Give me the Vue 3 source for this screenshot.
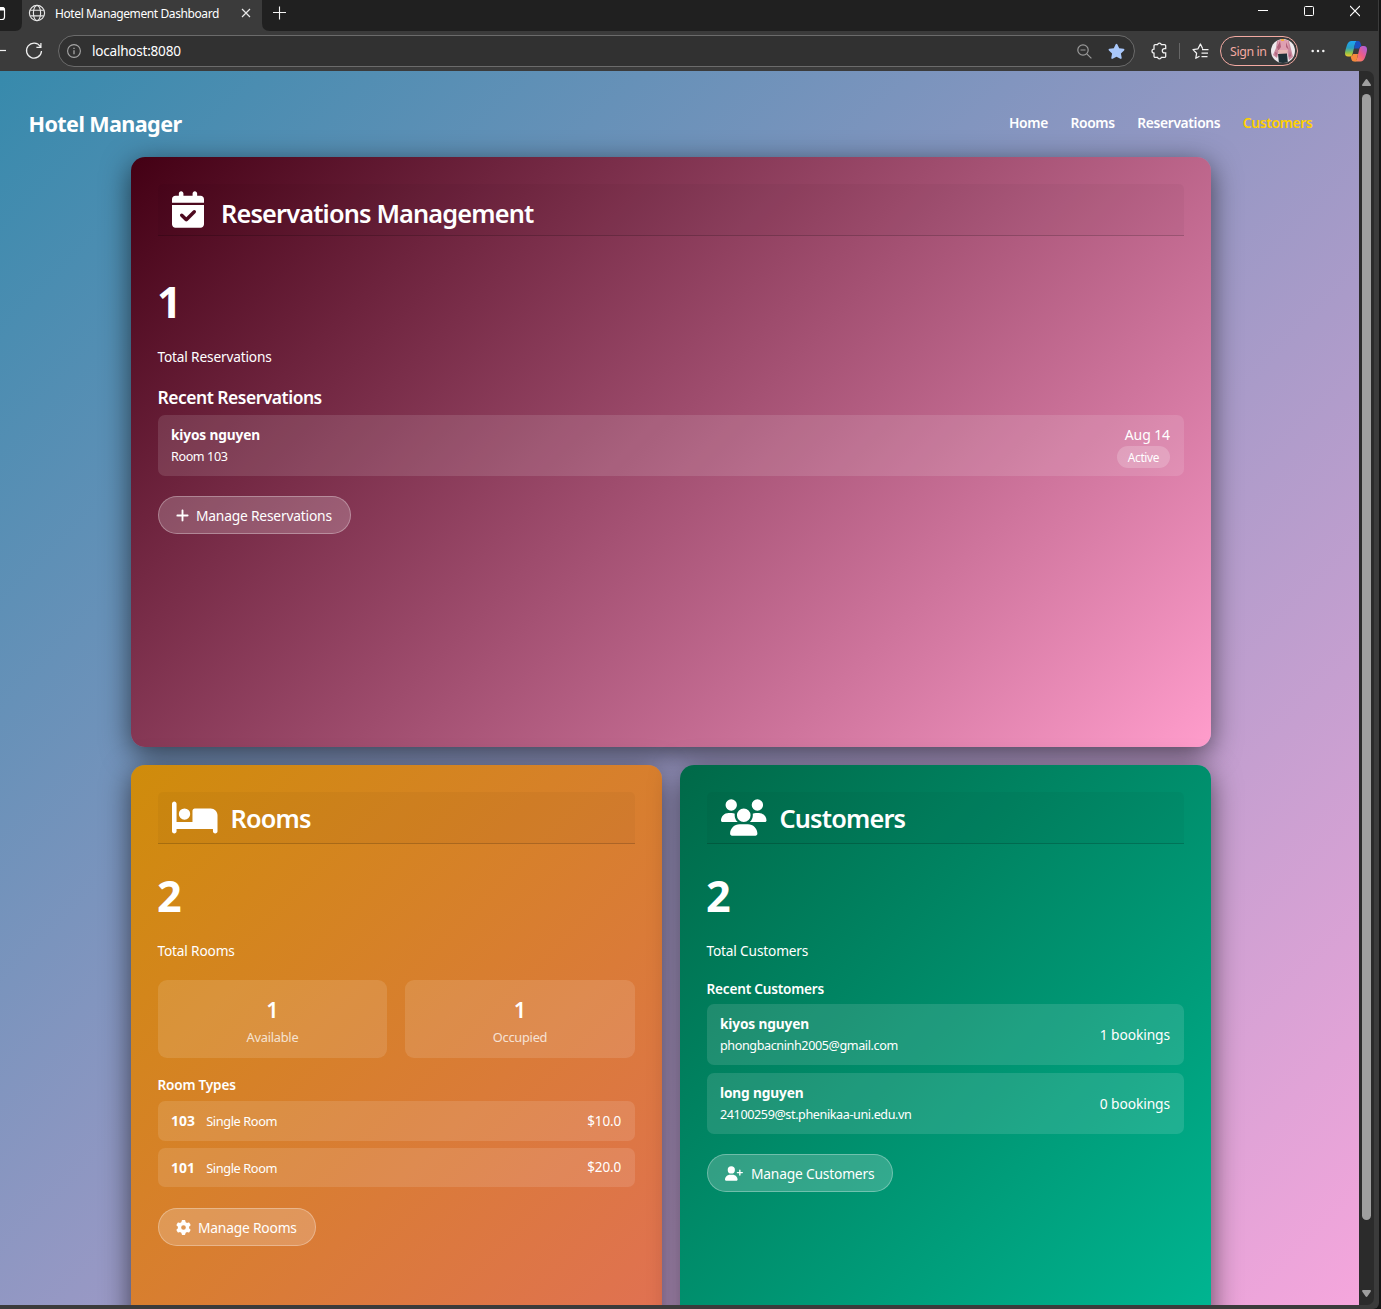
<script setup>
const icons = {
  calendar: { box: '0 0 448 512', d: 'M128 0c17.7 0 32 14.3 32 32V64H288V32c0-17.7 14.3-32 32-32s32 14.3 32 32V64h48c26.5 0 48 21.5 48 48v48H0V112C0 85.5 21.5 64 48 64H96V32c0-17.7 14.3-32 32-32zM0 192H448V464c0 26.5-21.5 48-48 48H48c-26.5 0-48-21.5-48-48V192zM329 305c9.4-9.4 9.4-24.6 0-33.9s-24.6-9.4-33.9 0l-95 95-47-47c-9.4-9.4-24.6-9.4-33.9 0s-9.4 24.6 0 33.9l64 64c9.4 9.4 24.6 9.4 33.9 0L329 305z' },
  bed: { box: '0 0 640 512', d: 'M32 32c17.7 0 32 14.3 32 32V320H288V160c0-17.7 14.3-32 32-32H544c53 0 96 43 96 96V448c0 17.7-14.3 32-32 32s-32-14.3-32-32V416H352 320 64v32c0 17.7-14.3 32-32 32s-32-14.3-32-32V64C0 46.3 14.3 32 32 32zm144 96a80 80 0 1 1 0 160 80 80 0 1 1 0-160z' },
  users: { box: '0 0 640 512', d: 'M144 0a80 80 0 1 1 0 160A80 80 0 1 1 144 0zM512 0a80 80 0 1 1 0 160A80 80 0 1 1 512 0zM0 298.7C0 239.8 47.8 192 106.7 192h42.7c15.9 0 31 3.5 44.6 9.7c-1.3 7.2-1.9 14.7-1.9 22.3c0 38.2 16.8 72.5 43.3 96c-.2 0-.4 0-.7 0H21.3C9.6 320 0 310.4 0 298.7zM405.3 320c-.2 0-.4 0-.7 0c26.6-23.5 43.3-57.8 43.3-96c0-7.6-.7-15-1.9-22.3c13.6-6.3 28.7-9.7 44.6-9.7h42.7C592.2 192 640 239.8 640 298.7c0 11.8-9.6 21.3-21.3 21.3H405.3zM224 224a96 96 0 1 1 192 0 96 96 0 1 1 -192 0zM128 485.3C128 411.7 187.7 352 261.3 352H378.7C452.3 352 512 411.7 512 485.3c0 14.7-11.9 26.7-26.7 26.7H154.7c-14.7 0-26.7-11.9-26.7-26.7z' },
  userPlus: { box: '0 0 640 512', d: 'M96 128a128 128 0 1 1 256 0A128 128 0 1 1 96 128zM0 482.3C0 383.8 79.8 304 178.3 304h91.4C368.2 304 448 383.8 448 482.3c0 16.4-13.3 29.7-29.7 29.7H29.7C13.3 512 0 498.7 0 482.3zM504 312V248H440c-13.3 0-24-10.7-24-24s10.7-24 24-24h64V136c0-13.3 10.7-24 24-24s24 10.7 24 24v64h64c13.3 0 24 10.7 24 24s-10.7 24-24 24H552v64c0 13.3-10.7 24-24 24s-24-10.7-24-24z' },
  plus: { box: '0 0 448 512', d: 'M256 80c0-17.7-14.3-32-32-32s-32 14.3-32 32V224H48c-17.7 0-32 14.3-32 32s14.3 32 32 32H192V432c0 17.7 14.3 32 32 32s32-14.3 32-32V288H400c17.7 0 32-14.3 32-32s-14.3-32-32-32H256V80z' },
  cog: { box: '0 0 512 512', d: 'M495.9 166.6c3.2 8.7 .5 18.4-6.4 24.6l-43.3 39.4c1.1 8.3 1.7 16.8 1.7 25.4s-.6 17.1-1.7 25.4l43.3 39.4c6.9 6.2 9.6 15.9 6.4 24.6c-4.4 11.9-9.7 23.3-15.8 34.3l-4.7 8.1c-6.6 11-14 21.4-22.1 31.2c-5.9 7.2-15.7 9.6-24.5 6.8l-55.7-17.7c-13.4 10.3-28.2 18.9-44 25.4l-12.5 57.1c-2 9.1-9 16.3-18.2 17.8c-13.8 2.3-28 3.5-42.5 3.5s-28.7-1.2-42.5-3.5c-9.2-1.5-16.2-8.7-18.2-17.8l-12.5-57.1c-15.8-6.5-30.6-15.1-44-25.4L83.1 425.9c-8.8 2.8-18.6 .3-24.5-6.8c-8.1-9.8-15.5-20.2-22.1-31.2l-4.7-8.1c-6.1-11-11.4-22.4-15.8-34.3c-3.2-8.7-.5-18.4 6.4-24.6l43.3-39.4C64.6 273.1 64 264.6 64 256s.6-17.1 1.7-25.4L22.4 191.2c-6.9-6.2-9.6-15.9-6.4-24.6c4.4-11.9 9.7-23.3 15.8-34.3l4.7-8.1c6.6-11 14-21.4 22.1-31.2c5.9-7.2 15.7-9.6 24.5-6.8l55.7 17.7c13.4-10.3 28.2-18.9 44-25.4l12.5-57.1c2-9.1 9-16.3 18.2-17.8C227.3 1.2 241.5 0 256 0s28.7 1.2 42.5 3.5c9.2 1.5 16.2 8.7 18.2 17.8l12.5 57.1c15.8 6.5 30.6 15.1 44 25.4l55.7-17.7c8.8-2.8 18.6-.3 24.5 6.8c8.1 9.8 15.5 20.2 22.1 31.2l4.7 8.1c6.1 11 11.4 22.4 15.8 34.3zM256 336a80 80 0 1 0 0-160 80 80 0 1 0 0 160z' },
}
const stats = [
  { value: 1, label: 'Available' },
  { value: 1, label: 'Occupied' },
]
const rooms = [
  { number: '103', type: 'Single Room', price: '$10.0' },
  { number: '101', type: 'Single Room', price: '$20.0' },
]
const customers = [
  { name: 'kiyos nguyen', email: 'phongbacninh2005@gmail.com', bookings: 1 },
  { name: 'long nguyen', email: '24100259@st.phenikaa-uni.edu.vn', bookings: 0 },
]
</script>

<template>
  <div class="screen">
    <div class="window">
      <div class="titlebar">
        <svg class="prev-tab" width="22" height="31" viewBox="0 0 22 31"><path d="M0 0H22V23Q22 31 15 31H0Z" fill="#202020" /><path d="M-6 7.500H2.500a2 2 0 0 1 2 2v7.500a2.500 2.500 0 0 1-2.500 2.500H-6" fill="none" stroke="#fff" stroke-width="1.200" /><path d="M-4 7H2.500a2 2 0 0 1 2 2v1.500H-4z" fill="#fff" /></svg>
        <div class="tab">
          <svg width="18" height="18" viewBox="0 0 18 18" fill="none" stroke="#e6e6e6" stroke-width="1.150"><circle cx="9" cy="9" r="7.600" /><ellipse cx="9" cy="9" rx="3.600" ry="7.600" /><path d="M2.200 6.200H15.800M2.200 11.800H15.800" /></svg>
          <span class="tab-title">Hotel Management Dashboard</span>
          <svg width="10" height="10" viewBox="0 0 10 10" stroke="#e8e8e8" stroke-width="1.200"><path d="M1 1L9 9M9 1L1 9" /></svg>
        </div>
        <svg class="tab-foot" width="8" height="8" viewBox="0 0 8 8"><path d="M0 0Q0 8 8 8H0Z" fill="#3b3b3b" /></svg>
        <svg class="new-tab" width="14" height="14" viewBox="0 0 14 14" stroke="#f4f4f4" stroke-width="1.100"><path d="M6.500 .5V13.500M0 6.500H13" /></svg>
        <div class="controls">
          <svg width="10" height="12" viewBox="0 0 10 12" stroke="#fff"><path d="M0 5.500H10" /></svg>
          <svg width="10" height="12" viewBox="0 0 10 12" stroke="#fff" fill="none"><rect x=".5" y="1.500" width="9" height="9" rx="1" /></svg>
          <svg width="10" height="12" viewBox="0 0 10 12" stroke="#fff" stroke-width="1.100"><path d="M0 1L10 11M10 1L0 11" /></svg>
        </div>
      </div>

      <div class="toolbar">
        <svg class="back" width="6" height="12" viewBox="0 0 6 12" stroke="#f0f0f0"><path d="M0 5.500H6" stroke-width="1.200" /></svg>
        <svg class="reload" width="18" height="18" viewBox="0 0 18 18" fill="none" stroke="#f0f0f0" stroke-width="1.250"><path d="M15.300 4.500A7.500 7.500 0 1 0 16.500 9M15.900 1V5.300H11.400" /></svg>
        <div class="address">
          <svg width="14" height="14" viewBox="0 0 14 14" fill="none" stroke="#a6a6a6" stroke-width="1.100"><circle cx="7" cy="7" r="6.400" /><path d="M7 6.200V10.200M7 3.800V5" stroke-width="1.300" /></svg>
          <span class="url">localhost:8080</span>
          <svg class="zoom" width="15" height="15" viewBox="0 0 15 15" fill="none" stroke="#9a9a9a" stroke-width="1.200"><circle cx="6" cy="6" r="5.200" /><path d="M9.800 9.800L14.400 14.400M3.500 6H8.500" /></svg>
          <svg class="star" width="17" height="17" viewBox="0 0 17 17" fill="#a8c7fa"><path d="M7.700 1.200a.9.900 0 0 1 1.600 0l1.900 4 4.400.6c.8.100 1.100 1 .5 1.600l-3.200 3 .8 4.400c.1.800-.6 1.300-1.300 1L8.500 13.700l-3.900 2.100c-.7.400-1.500-.2-1.300-1l.8-4.400-3.200-3c-.6-.6-.3-1.500.5-1.600l4.400-.6z" /></svg>
        </div>
        <svg class="puzzle" width="17" height="18" viewBox="0 0 17 18" fill="none" stroke="#f2f2f2" stroke-width="1.250"><path d="M4.200 2.700H6.600a1.900 1.900 0 0 1 3.700 0h3.200a1.200 1.200 0 0 1 1.200 1.200v2.600h-1.200a2.200 2.200 0 0 0 0 4.400h1.200v3.300a1.200 1.200 0 0 1-1.200 1.200h-3.200a1.900 1.900 0 0 1-3.700 0H4.200a1.200 1.200 0 0 1-1.200-1.200V11a2 2 0 0 1 0-4V3.900a1.200 1.200 0 0 1 1.200-1.200z" /></svg>
        <i class="divider"></i>
        <svg class="favs" width="17" height="17" viewBox="0 0 17 17" fill="none" stroke="#f2f2f2" stroke-width="1.250" stroke-linejoin="round"><path d="M10.700 5.700L8.400 1 6 5.800l-5 .8 3.600 3.700-.8 5 3.700-2M10 6.500h6.500M9.500 10H16M9.500 13.500h6" /></svg>
        <div class="signin">
          <span>Sign in</span>
          <svg width="24" height="24" viewBox="0 0 24 24"><defs><clipPath id="face"><circle cx="12" cy="12" r="12" /></clipPath></defs><g clip-path="url(#face)"><path fill="#eee8ec" d="M0 0h24v24H0z" /><path fill="#c98a9e" d="M6 2Q12-1 18 2l2 8 2 8-4 3-2-9H8L6 19l-4-3 3-7z" /><path fill="#dfa0b2" d="M7 2Q12 0 17 2l1 9H6z" /><path fill="#b0607a" d="M9 2l1 6-3 4-1-4zM15 3l3 8-3-3zM4 13l2 1-1 4zM19 12l1 5-2 1z" /><path fill="#e9b9b4" d="M7 11h10l-1 4H8z" /><path fill="#1f3036" d="M7 15l9-.5 1 10H8z" /><path fill="#f3ad3e" d="M10 0h3v2h-3z" /></g></svg>
        </div>
        <svg class="more" width="14" height="4" viewBox="0 0 14 4" fill="#f2f2f2"><circle cx="1.700" cy="2" r="1.250" /><circle cx="7" cy="2" r="1.250" /><circle cx="12.300" cy="2" r="1.250" /></svg>
        <svg class="copilot" width="22" height="21" viewBox="0 0 22 21">
          <defs>
            <linearGradient id="ca" x1="0" y1="0" x2="0" y2="1"><stop offset="0" stop-color="#1ca5f5" /><stop offset=".45" stop-color="#2a9fc0" /><stop offset=".75" stop-color="#8cc24a" /><stop offset="1" stop-color="#f5c72c" /></linearGradient>
            <linearGradient id="cb" x1="1" y1="0" x2="0" y2="1"><stop offset="0" stop-color="#a45fe8" /><stop offset=".5" stop-color="#ee5d86" /><stop offset="1" stop-color="#ff9a4a" /></linearGradient>
          </defs>
          <path d="M6.500 0H13Q10.800 0 10 3L7.500 13Q7 15.500 5 15.500H3Q0 15.500 0 12.500 0 10 2 4 3.500 0 6.500 0z" fill="url(#ca)" />
          <path d="M15.500 20.500H9Q11.200 20.500 12 17.500L14.500 7.500Q15 5 17 5h2q3 0 3 3.500 0 2.500-2 8-1.500 4-4.500 4z" fill="url(#cb)" />
          <path d="M11.500 0h1.700q1.800 0 2.300 2l.9 3q-1.900.5-2.400 2.500H9l1-4.500Q10.500.8 11.500 0z" fill="#1c50c0" />
          <path d="M10.500 20.500H8.800q-1.800 0-2.300-2l-.9-3q1.900-.5 2.400-2.500h5l-1 4.500q-.5 2.200-1.500 3z" fill="#f58a3c" />
        </svg>
      </div>

      <div class="viewport">
        <div class="page">
          <header class="nav">
            <div class="brand">Hotel Manager</div>
            <nav>
              <a>Home</a><a>Rooms</a><a>Reservations</a><a class="active">Customers</a>
            </nav>
          </header>

          <main>
            <section class="card reservations">
              <div class="card-head">
                <svg class="w32" :viewBox="icons.calendar.box"><path :d="icons.calendar.d" /></svg>
                <h2 class="t-res">Reservations Management</h2>
              </div>
              <div class="number">1</div>
              <p class="total">Total Reservations</p>
              <h5>Recent Reservations</h5>
              <div class="item tall">
                <div>
                  <div class="name">kiyos nguyen</div>
                  <div class="sub">Room 103</div>
                </div>
                <div class="right">
                  <div class="date">Aug 14</div>
                  <div class="badge">Active</div>
                </div>
              </div>
              <a class="btn b-res"><svg width="13" height="15" :viewBox="icons.plus.box"><path :d="icons.plus.d" /></svg><span>Manage Reservations</span></a>
            </section>

            <section class="card rooms">
              <div class="card-head">
                <svg class="w46" :viewBox="icons.bed.box"><path :d="icons.bed.d" /></svg>
                <h2>Rooms</h2>
              </div>
              <div class="number">2</div>
              <p class="total">Total Rooms</p>
              <div class="stats">
                <div v-for="s in stats" :key="s.label" class="stat">
                  <b>{{ s.value }}</b>
                  <span>{{ s.label }}</span>
                </div>
              </div>
              <h6>Room Types</h6>
              <div v-for="r in rooms" :key="r.number" class="item row">
                <div><b class="num">{{ r.number }}</b><span class="type">{{ r.type }}</span></div>
                <span class="price">{{ r.price }}</span>
              </div>
              <a class="btn b-room"><svg width="15" height="15" :viewBox="icons.cog.box"><path :d="icons.cog.d" /></svg><span>Manage Rooms</span></a>
            </section>

            <section class="card customers">
              <div class="card-head">
                <svg class="w46" :viewBox="icons.users.box"><path :d="icons.users.d" /></svg>
                <h2>Customers</h2>
              </div>
              <div class="number">2</div>
              <p class="total">Total Customers</p>
              <h6>Recent Customers</h6>
              <div v-for="c in customers" :key="c.name" class="item tall">
                <div>
                  <div class="name">{{ c.name }}</div>
                  <div class="sub">{{ c.email }}</div>
                </div>
                <span class="bookings">{{ c.bookings }} bookings</span>
              </div>
              <a class="btn b-cust"><svg width="18" height="15" :viewBox="icons.userPlus.box"><path :d="icons.userPlus.d" /></svg><span>Manage Customers</span></a>
            </section>
          </main>
        </div>
        <div class="scrollbar">
          <svg width="9" height="7" viewBox="0 0 9 7" fill="#9f9f9f"><path d="M3.500.8a1.200 1.200 0 0 1 2 0L8.800 5.500Q9.200 7 8 7H1Q-.2 7 .2 5.500z" /></svg>
          <i></i>
          <svg class="down" width="9" height="7" viewBox="0 0 9 7" fill="#9f9f9f"><path d="M3.500 6.200a1.200 1.200 0 0 0 2 0L8.800 1.500Q9.200 0 8 0H1Q-.2 0 .2 1.500z" /></svg>
        </div>
      </div>
    </div>
  </div>
</template>

<style>
body { background: #151515; overflow: hidden; }
</style>

<style scoped>
* { box-sizing: border-box; }
h2, h5, h6, p { margin: 0; }
svg { display: block; flex: none; }
.screen {
  width: 1381px;
  height: 1309px;
  overflow: hidden;
  background: #151515;
  color: #fff;
  font-family: "Noto Sans", "Open Sans", sans-serif;
  font-size: 14.4px;
  white-space: nowrap;
}
.window {
  width: 1379px;
  height: 1309px;
  background: #3b3b3b;
  border-radius: 0 0 6px 0;
}
.titlebar {
  height: 31px;
  width: 1378px;
  background: #202020;
  display: flex;
}
.prev-tab { background: #3b3b3b; }
.tab {
  width: 240px;
  background: #3b3b3b;
  display: flex;
  align-items: center;
  padding: 0 11px 5px 6px;
}
.tab-title {
  font-size: 12px;
  letter-spacing: -0.4px;
  margin-left: 9px;
  flex: 1;
}
.tab-foot { align-self: flex-end; }
.new-tab { margin: 6px 0 0 3px; }
.controls {
  margin-left: auto;
  padding: 5px 18px 0 0;
  display: flex;
  gap: 36px;
}
.toolbar {
  height: 40px;
  display: flex;
  align-items: center;
}
.reload { margin-left: 19px; }
.address {
  margin-left: 15px;
  width: 1077px;
  height: 32px;
  border: 1px solid #6b6b6b;
  border-radius: 16px;
  background: #313131;
  display: flex;
  align-items: center;
  padding: 0 9px 0 8px;
}
.url { font-size: 13.600px; letter-spacing: -0.25px; margin-left: 11px; padding-bottom: 1px; flex: 1; }
.star { margin-left: 16px; }
.puzzle { margin-left: 16px; }
.divider { width: 1px; height: 16px; background: #666; margin-left: 11px; }
.favs { margin-left: 12px; }
.signin {
  margin-left: 11px;
  width: 78px;
  height: 30px;
  border: 1px solid #f3aaa2;
  border-radius: 15px;
  color: #f3aaa2;
  font-size: 12.400px;
  letter-spacing: -0.4px;
  display: flex;
  align-items: center;
  justify-content: space-between;
  padding: 0 2px 0 9px;
}
.more { margin-left: 13px; }
.copilot { margin-left: 20px; }
.viewport {
  height: 1234px;
  width: 1374px;
  display: flex;
  overflow: hidden;
  border-radius: 0 7px 7px 0;
}
.page {
  width: 1359px;
  height: 1234px;
  overflow: hidden;
  background: linear-gradient(135deg, #378aac 0%, #f5a6dc 100%);
}
.nav {
  height: 86px;
  padding: 0 46.500px 0 28.500px;
  display: flex;
  justify-content: space-between;
}
.brand { font-size: 21.600px; line-height: 30px; font-weight: 700; margin-top: 38px; letter-spacing: -0.6px; }
.nav nav {
  display: flex;
  gap: 22.500px;
  margin-top: 42px;
  font-size: 13.800px;
  line-height: 20px;
  font-weight: 600;
  letter-spacing: -0.33px;
}
.nav .active { color: #ffd000; }
main {
  width: 1080px;
  margin-left: 131px;
  display: grid;
  grid-template-columns: 531px 531px;
  grid-template-rows: 590px 590px;
  gap: 18px 18px;
}
.card {
  border-radius: 14px;
  padding: 27px;
  box-shadow: 0 7px 29px rgba(0, 0, 0, 0.6);
}
.reservations { grid-column: 1 / 3; background: linear-gradient(135deg, #430014, #ff9dcc); }
.rooms { background: linear-gradient(135deg, #cf8c0b, #e17055); }
.customers { background: linear-gradient(135deg, #006948, #00b894); }
.card-head {
  height: 52px;
  background: rgba(0, 0, 0, 0.03);
  border-bottom: 1px solid rgba(0, 0, 0, 0.18);
  border-radius: 5px 5px 0 0;
  display: flex;
  padding: 7px 14px 0;
  fill: #fff;
}
.w32 { width: 32px; height: 37px; }
.w46 { width: 45.500px; height: 37px; }
.card-head h2 {
  margin: 3px 0 0 13px;
  font-size: 25.300px;
  line-height: 32px;
  font-weight: 600;
  letter-spacing: -0.83px;
}
.card-head .t-res { margin: 6px 0 0 17px; }
.number { font-size: 43.200px; line-height: 52px; font-weight: 700; margin: 26px 0 0 -1px; letter-spacing: -1px; }
.reservations .number { margin-top: 40px; }
.total { font-size: 13.700px; line-height: 22px; margin: 18px 0 0 -0.500px; letter-spacing: -0.17px; }
h5 { font-size: 17.500px; line-height: 22px; font-weight: 600; margin: 18px 0 7px -0.500px; letter-spacing: -0.5px; }
h6 { font-size: 13.600px; line-height: 20px; font-weight: 600; margin: 17px 0 6px -0.500px; letter-spacing: -0.2px; }
.customers h6 { margin-bottom: 5px; }
.item {
  background: rgba(255, 255, 255, 0.12);
  border-radius: 7px;
  padding: 0 14px 0 13px;
  display: flex;
  align-items: center;
  justify-content: space-between;
}
.tall { height: 60.500px; margin-bottom: 8.500px; }
.row { height: 39.500px; margin-bottom: 7px; }
.name { font-size: 13.700px; line-height: 21px; font-weight: 700; letter-spacing: -0.15px; }
.sub { font-size: 12.600px; line-height: 19px; padding: 2px 0 0; letter-spacing: -0.4px; }
.right { display: flex; flex-direction: column; align-items: flex-end; padding-top: 1px; }
.date { line-height: 22px; font-size: 14px; letter-spacing: -0.1px; }
.badge {
  height: 22px;
  width: 53px;
  text-align: center;
  line-height: 23px;
  border-radius: 11px;
  font-size: 11.800px;
  letter-spacing: -0.3px;
  background: rgba(255, 255, 255, 0.2);
}
.bookings { font-size: 13.800px; letter-spacing: -0.1px; }
.btn {
  display: inline-flex;
  align-items: center;
  height: 38px;
  margin-top: 12px;
  padding-left: 17px;
  border: 1px solid rgba(255, 255, 255, 0.3);
  border-radius: 19px;
  background: rgba(255, 255, 255, 0.2);
  fill: #fff;
  font-size: 13.800px;
  letter-spacing: -0.2px;
}
.btn span { margin-left: 7px; }
.b-res { width: 193px; }
.b-room { width: 158px; margin-top: 14px; }
.b-cust { width: 186px; }
.b-cust span { margin-left: 8px; }
.stats { display: grid; grid-template-columns: 229px 230px; gap: 18px; margin-top: 18px; }
.stat {
  height: 78px;
  border-radius: 9px;
  background: rgba(255, 255, 255, 0.12);
  display: flex;
  flex-direction: column;
  align-items: center;
  padding-top: 17px;
}
.stat b { font-size: 21.600px; line-height: 26px; font-weight: 600; }
.stat span { font-size: 12.800px; line-height: 18px; margin-top: 5px; opacity: 0.75; letter-spacing: -0.25px; }
.num { font-size: 13.900px; font-weight: 700; letter-spacing: 0.1px; }
.type { font-size: 12.800px; margin-left: 11px; letter-spacing: -0.4px; }
.price { font-size: 13.500px; letter-spacing: -0.15px; }
.scrollbar {
  width: 15px;
  background: #2b2b2b;
  padding: 8px 0 0 3px;
}
.scrollbar i { display: block; width: 9px; height: 1126px; margin-top: 8px; border-radius: 4.500px; background: #9f9f9f; }
.down { margin-top: 70px; }
</style>
